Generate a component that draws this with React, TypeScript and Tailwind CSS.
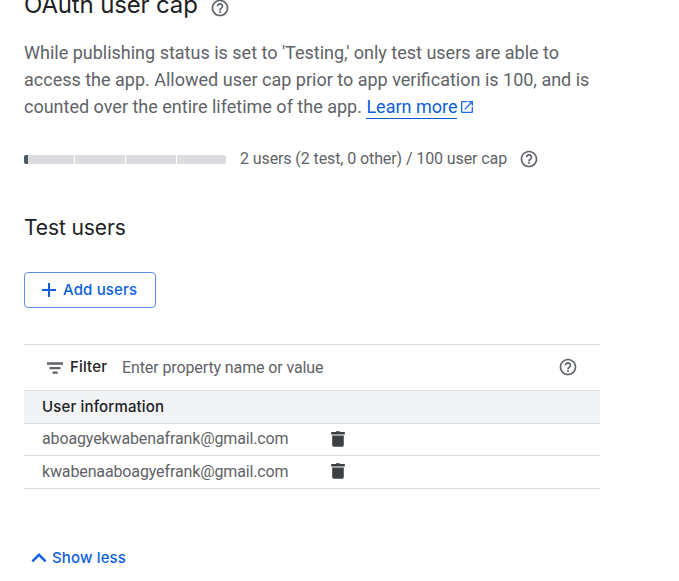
import type { ReactNode } from 'react';

type IconProps = { className: string; d: string; viewBox?: string };

const Icon = ({ className, d, viewBox = '0 0 24 24' }: IconProps) => (
  <svg viewBox={viewBox} fill="currentColor" aria-hidden="true" className={`shrink-0 ${className}`}>
    <path d={d} />
  </svg>
);

const HELP =
  'M11 18h2v-2h-2v2zm1-16C6.48 2 2 6.48 2 12s4.48 10 10 10 10-4.48 10-10S17.52 2 12 2zm0 18c-4.41 0-8-3.59-8-8s3.59-8 8-8 8 3.59 8 8-3.59 8-8 8zm0-14c-2.21 0-4 1.79-4 4h2c0-1.1.9-2 2-2s2 .9 2 2c0 2-3 1.75-3 5h2c0-2.25 3-2.5 3-5 0-2.21-1.79-4-4-4z';
const LAUNCH =
  'M19 19H5V5h7V3H5c-1.11 0-2 .9-2 2v14c0 1.1.89 2 2 2h14c1.1 0 2-.9 2-2v-7h-2v7zM14 3v2h3.59l-9.83 9.83 1.41 1.41L19 6.41V10h2V3h-7z';
const TRASH =
  'M1.2 4.5h11.6v9.6a1.6 1.6 0 0 1-1.6 1.6H2.8a1.6 1.6 0 0 1-1.6-1.6zM.2 1h4.3l.8-.8h3.4l.8.8h4.3v2.4H.2z';

const users = ['aboagyekwabenafrank@gmail.com', 'kwabenaaboagyefrank@gmail.com'];

const Heading = ({ children, className }: { children: ReactNode; className: string }) => (
  <h2 className={`font-[Inter,sans-serif] whitespace-nowrap text-[#202124] ${className}`}>{children}</h2>
);

export default function App() {
  return (
    <main className="h-[581px] w-[679px] overflow-hidden bg-white pl-6 font-[Roboto,sans-serif] text-[#5f6368]">
      <div className="-mt-[10px] flex h-[30px] items-center">
        <Heading className="w-[186px] text-[24px] leading-[30px] tracking-[-0.15px]">OAuth user cap</Heading>
        <Icon className="mt-[6px] size-5" d={HELP} />
      </div>

      <p className="mt-[19px] text-[18px] leading-[27px] whitespace-nowrap">
        While publishing status is set to 'Testing,' only test users are able to
        <br />
        access the app. Allowed user cap prior to app verification is 100, and is
        <br />
        counted over the entire lifetime of the app.{' '}
        <a className="border-b border-[#0b57d0] pb-px text-[#0b5fdc]">Learn more</a>
        <Icon className="ml-[2px] inline size-4 align-[-2px] text-[#1a6fe8]" d={LAUNCH} />
      </p>

      <div className="mt-[27px] flex h-6 items-center">
        <div className="flex h-[9px] w-[202px] gap-px overflow-hidden rounded-[2px]">
          <div className="w-[50px] bg-[#dadce0]">
            <div className="h-full w-1 bg-[#455a64]" />
          </div>
          <div className="w-[50px] bg-[#dadce0]" />
          <div className="w-[50px] bg-[#dadce0]" />
          <div className="flex-1 bg-[#dadce0]" />
        </div>
        <span className="ml-[14px] w-[279px] text-[16px] tracking-[-0.1px] whitespace-nowrap">
          2 users (2 test, 0 other) / 100 user cap
        </span>
        <Icon className="size-5" d={HELP} />
      </div>

      <Heading className="mt-[42px] text-[21px] leading-[30px] tracking-[-0.1px]">Test users</Heading>

      <button className="mt-[29px] flex h-9 w-[132px] items-center rounded-[4px] border border-[#5f8fdc] pl-3 font-[Inter,sans-serif] text-[15px] font-medium tracking-[0.15px] text-[#0b5fdc]">
        <Icon className="size-6" d="M19 13h-6v6h-2v-6H5v-2h6V5h2v6h6v2z" />
        <span className="ml-[2px] whitespace-nowrap">Add users</span>
      </button>

      <section className="mt-9 w-[576px] border-t border-[#dadce0]">
        <div className="flex h-[45px] items-center pl-[21px] text-[16px]">
          <Icon className="size-5" d="M9 18.8h6.2v-2.6H9zM2.4 5.2v2.8h19.2V5.2zM5.4 13.4h13.2v-2.6H5.4z" />
          <span className="ml-[5px] w-[52px] font-[Inter,sans-serif] text-[15px] font-medium tracking-[0.15px] text-[#202124]">
            Filter
          </span>
          <span className="mt-px tracking-[-0.11px] whitespace-nowrap">Enter property name or value</span>
          <Icon className="mr-[22px] ml-auto size-5 -translate-y-px" d={HELP} />
        </div>
        <div className="flex h-[34px] items-center border-y border-[#dadce0] bg-[#f1f3f4] pl-[18px] font-[Inter,sans-serif] text-[15px] font-medium tracking-[0.15px] text-[#202124]">
          User information
        </div>
        {users.map((user) => (
          <div
            key={user}
            className="flex h-8 items-center border-b border-[#dadce0] pl-[18px] text-[16px] last:h-[33px]"
          >
            <span className="-mt-px w-[289px] tracking-[-0.13px]">{user}</span>
            <Icon className="mb-[2px] h-4 w-[14px] text-[#3c4043]" viewBox="0 0 14 16" d={TRASH} />
          </div>
        ))}
      </section>

      <button className="mt-[57px] flex h-6 items-center font-[Inter,sans-serif] text-[15px] font-medium tracking-[0.15px] text-[#0b5fdc]">
        <Icon className="size-[30px]" d="M12 8l-6 6 1.41 1.41L12 10.83l4.59 4.58L18 14z" />
        <span className="-ml-[2px]">Show less</span>
      </button>
    </main>
  );
}
